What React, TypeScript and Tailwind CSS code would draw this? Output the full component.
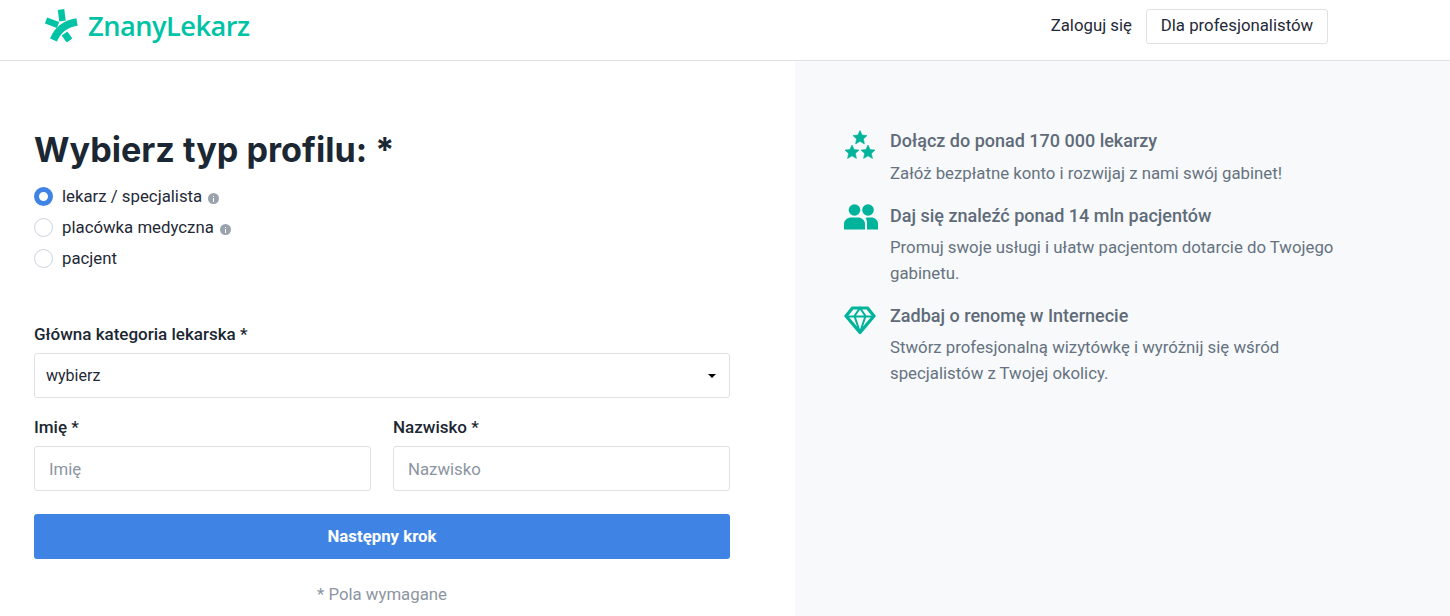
function LogoMark() {
  return (
    <svg width="33" height="33" viewBox="0 0 33 33" fill="none" stroke="#00c3a5" strokeWidth="6.5">
      <path d="M16 0.5 L17.5 12" />
      <path d="M1 11.5 L13 16" />
      <path d="M32 13 C22 14.5 13 20 8.5 31" strokeWidth="7.5" />
      <path d="M19.5 24.5 L24.5 31.5" strokeWidth="7" />
    </svg>
  );
}

function Stars() {
  const star =
    "M0 -7 L2.1 -2.4 L7 -1.9 L3.4 1.4 L4.4 6.4 L0 3.8 L-4.4 6.4 L-3.4 1.4 L-7 -1.9 L-2.1 -2.4 Z";
  return (
    <svg width="32" height="30" viewBox="0 0 32 30" fill="#00b39b" stroke="#00b39b" strokeWidth="0.6" strokeLinejoin="round" className="mt-[1px]">
      <path d={star} transform="translate(16 7.5)" />
      <path d={star} transform="translate(8 22)" />
      <path d={star} transform="translate(24 22)" />
    </svg>
  );
}

function People() {
  return (
    <svg width="34" height="26" viewBox="0 0 34 26" fill="#00b39b">
      <circle cx="10.5" cy="6" r="5.8" />
      <circle cx="24" cy="6" r="5.8" />
      <path d="M0 25.5 V20 C0 16 3.5 13.5 7.5 13.5 H13.5 C17.5 13.5 21 16 21 20 V25.5 Z" />
      <path d="M23 25.5 V19 C23 17 22.5 15.5 21.5 13.8 C22.5 13.5 25 13.5 27 13.5 C31 13.5 34 16 34 20 V25.5 Z" />
    </svg>
  );
}

function Diamond() {
  return (
    <svg width="32" height="30" viewBox="0 0 32 30" fill="none" stroke="#00b39b" strokeWidth="3.2" strokeLinejoin="round" className="mt-[1px]">
      <path d="M8.5 3 H23.5 L30 11 L16 27.5 L2 11 Z" />
      <path d="M2 11.5 H30 M10.5 11 L16 27.5 L21.5 11 L16 3 L10.5 11" strokeWidth="2" />
    </svg>
  );
}

function Radio({ label, checked, info }: { label: string; checked?: boolean; info?: boolean }) {
  return (
    <div className="flex h-[31px] items-center">
      {checked ? (
        <span className="h-[19px] w-[19px] rounded-full border-[5px] border-[#3f84e4] bg-white" />
      ) : (
        <span className="h-[19px] w-[19px] rounded-full border border-[#ced3db] bg-white" />
      )}
      <span className="ml-[9px] text-[16.8px] text-[#1f2937]">{label}</span>
      {info && (
        <span className="ml-[6px] mt-[4px] flex h-[11px] w-[11px] flex-col items-center justify-center gap-[1px] rounded-full bg-[#9aa2ad]">
          <span className="h-[1px] w-[1.5px] bg-white" />
          <span className="h-[4px] w-[1.5px] bg-white" />
        </span>
      )}
    </div>
  );
}

function Benefit({ icon, title, children }: { icon: React.ReactNode; title: string; children: React.ReactNode }) {
  return (
    <div className="flex">
      <div className="flex w-[46px] shrink-0 justify-start pt-[1px]">{icon}</div>
      <div>
        <div className="text-[18px] font-medium leading-[25px] text-[#5f6b78]">{title}</div>
        <div className="mt-[6px] text-[16.8px] leading-[26px] text-[#66727f]">{children}</div>
      </div>
    </div>
  );
}

export default function App() {
  return (
    <div className="h-[616px] overflow-hidden bg-white font-['Roboto',sans-serif]">
      <header className="flex h-[61px] items-center justify-between border-b border-[#dfe1e5] pl-[45px] pr-[122px]">
        <div className="mb-[8px] flex items-center gap-[10px]">
          <LogoMark />
          <span className="font-['Open_Sans',sans-serif] text-[27.2px] font-semibold tracking-[-0.5px] text-[#00c3a5]">
            ZnanyLekarz
          </span>
        </div>
        <div className="mb-[8px] flex items-center gap-[14px]">
          <span className="text-[16.8px] text-[#1f2937]">Zaloguj się</span>
          <button className="h-[35px] w-[182px] rounded-[3px] border border-[#dfe1e5] bg-white text-[16.8px] text-[#1f2937]">
            Dla profesjonalistów
          </button>
        </div>
      </header>

      <main className="flex h-[555px]">
        <section className="w-[795px] shrink-0 pl-[34px] pr-[65px] pt-[67px]">
          <h1 className="font-['Inter',sans-serif] text-[34.2px] font-bold leading-[44px] text-[#1b2733]">
            Wybierz typ profilu: *
          </h1>
          <div className="mt-[9px]">
            <Radio label="lekarz / specjalista" checked info />
            <Radio label="placówka medyczna" info />
            <Radio label="pacjent" />
          </div>

          <label className="mt-[48px] block text-[17px] font-medium leading-[24px] text-[#1b2733]">
            Główna kategoria lekarska *
          </label>
          <div className="mt-[7px] flex h-[45px] items-center justify-between rounded-[3px] border border-[#dfe1e5] pl-[11px] pr-[13px] pt-[1px] text-base text-[#1f2937]">
            <span>wybierz</span>
            <span className="h-0 w-0 border-x-[4px] border-t-[4px] border-x-transparent border-t-black" />
          </div>

          <div className="mt-[17px] grid grid-cols-2 gap-[22px]">
            <div>
              <label className="block text-[17px] font-medium leading-[24px] text-[#1b2733]">Imię *</label>
              <input
                placeholder="Imię"
                className="mt-[7px] h-[45px] w-full rounded-[3px] border border-[#dfe1e5] px-[14px] text-[16.8px] placeholder:text-[#8c95a1]"
              />
            </div>
            <div>
              <label className="block text-[17px] font-medium leading-[24px] text-[#1b2733]">Nazwisko *</label>
              <input
                placeholder="Nazwisko"
                className="mt-[7px] h-[45px] w-full rounded-[3px] border border-[#dfe1e5] px-[14px] text-[16.8px] placeholder:text-[#8c95a1]"
              />
            </div>
          </div>

          <button className="mt-[23px] h-[45px] w-full rounded-[3px] bg-[#3f84e4] text-[16.8px] font-bold text-white">
            Następny krok
          </button>
          <p className="mt-[23px] text-center text-[16.8px] leading-[24px] text-[#8c95a1]">* Pola wymagane</p>
        </section>

        <aside className="flex-1 bg-[#f7f9fb] pl-[49px] pr-[100px] pt-[67px]">
          <div className="flex flex-col gap-[17px]">
            <Benefit icon={<Stars />} title="Dołącz do ponad 170 000 lekarzy">
              <span className="block pt-[1px]">Załóż bezpłatne konto i rozwijaj z nami swój gabinet!</span>
            </Benefit>
            <Benefit icon={<People />} title="Daj się znaleźć ponad 14 mln pacjentów">
              Promuj swoje usługi i ułatw pacjentom dotarcie do Twojego gabinetu.
            </Benefit>
            <Benefit icon={<Diamond />} title="Zadbaj o renomę w Internecie">
              Stwórz profesjonalną wizytówkę i wyróżnij się wśród specjalistów z Twojej okolicy.
            </Benefit>
          </div>
        </aside>
      </main>
    </div>
  );
}
